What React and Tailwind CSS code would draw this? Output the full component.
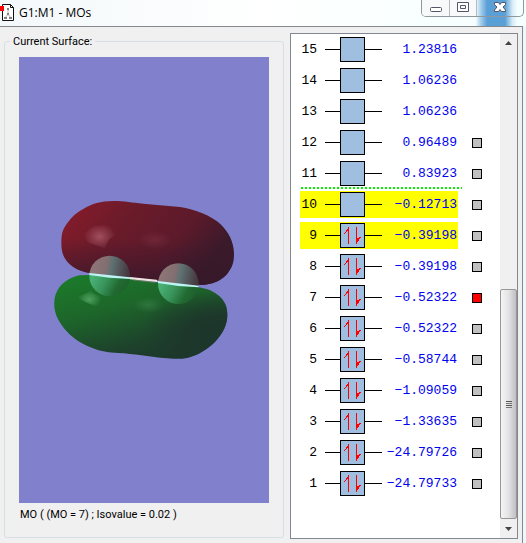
import React, { useState } from 'react';

const orbitals = [
  { id: 15, energy: '1.23816' },
  { id: 14, energy: '1.06236' },
  { id: 13, energy: '1.06236' },
  { id: 12, energy: '0.96489', selectable: true },
  { id: 11, energy: '0.83923', selectable: true },
  { id: 10, energy: '−0.12713', selectable: true, highlighted: true },
  { id: 9, energy: '−0.39198', selectable: true, highlighted: true, occupied: true },
  { id: 8, energy: '−0.39198', selectable: true, occupied: true },
  { id: 7, energy: '−0.52322', selectable: true, occupied: true },
  { id: 6, energy: '−0.52322', selectable: true, occupied: true },
  { id: 5, energy: '−0.58744', selectable: true, occupied: true },
  { id: 4, energy: '−1.09059', selectable: true, occupied: true },
  { id: 3, energy: '−1.33635', selectable: true, occupied: true },
  { id: 2, energy: '−24.79726', selectable: true, occupied: true },
  { id: 1, energy: '−24.79733', selectable: true, occupied: true },
];

function DocumentIcon() {
  return (
    <svg className="h-5 w-4 shrink-0" viewBox="0 0 16 20" aria-hidden="true">
      <path d="M2.500 1.500h8l3 3v13h-11z" fill="#fff" stroke="#111" />
      <path d="M10.500 1.500v3h3" fill="none" stroke="#111" />
      <path d="M8 6v5l-3 4M8 11l3 4" fill="none" stroke="#b0b0b0" />
      <path d="M7 5h2v2H7zM7 10h2v2H7zM4 14h3v2H4zM9 14h3v2H9z" fill="#808080" />
      <path d="M0 3h4v5H0z" fill="#f00" />
    </svg>
  );
}

function TitleBar() {
  return (
    <header className="flex h-[26px] justify-between bg-linear-to-r from-[#f3f8fa] via-white to-[#f4ffff]">
      <div className="flex items-center">
        <DocumentIcon />
        <h1 className="pl-[3px] font-['Open_Sans',sans-serif] text-[12px] text-black">G1:M1 - MOs</h1>
      </div>
      <div className="flex bg-[linear-gradient(to_right,transparent_52%,#a5cdea_57%,#5a9fd6_63%,#5a9fd6_80%,#d5ebf7_87%,transparent_92%)] pr-[2px]">
        <div className="flex h-[17px] overflow-hidden rounded-b-[5px] border border-t-0 border-[#8f989e]">
          <button type="button" aria-label="Minimize" className="flex w-[28px] items-center justify-center border-r border-[#b5babf] bg-[#f7f9fa]">
            <svg className="h-[17px] w-[14px]" viewBox="0 0 14 17">
              <rect x="1.500" y="7.500" width="11" height="4" rx="1" fill="#fff" stroke="#535666" />
            </svg>
          </button>
          <button type="button" aria-label="Maximize" className="flex w-[27px] items-center justify-center border-r border-[#b5babf] bg-[#f7f9fa]">
            <svg className="h-[17px] w-[14px]" viewBox="0 0 14 17">
              <path d="M1.500 2.500h11v9h-11zM4.500 5.500v3h5v-3z" fill="#fff" fillRule="evenodd" stroke="#535666" />
            </svg>
          </button>
          <button type="button" aria-label="Close" className="flex w-[46px] items-center justify-center">
            <svg className="h-[17px] w-[14px]" viewBox="0 0 14 17">
              <path d="M1.500 2.500H5.500L7 4.500l1.500-2h4v2L10 7l2.500 3v1.500h-4L7 9.500l-1.500 2h-4V10L4 7L1.500 4.500z" fill="#fff" stroke="#535666" />
            </svg>
          </button>
        </div>
      </div>
    </header>
  );
}

// Isosurface of a pi orbital: one lobe on each side of the bond axis
function OrbitalView() {
  return (
    <svg className="h-0 w-full flex-1 bg-[#8080cc]" viewBox="0 0 250 446" role="img" aria-label="Molecular orbital surface">
      <defs>
        <linearGradient id="red" x1="0" y1="0.250" x2="1" y2="0.650">
          <stop offset="0" stopColor="#841b2a" />
          <stop offset="0.300" stopColor="#6b1b2a" />
          <stop offset="0.650" stopColor="#5c1a2b" />
          <stop offset="0.900" stopColor="#3b1a2a" />
        </linearGradient>
        <linearGradient id="redShade" x1="0" y1="0" x2="0" y2="1">
          <stop offset="0.450" stopColor="#35182a" stopOpacity="0" />
          <stop offset="1" stopColor="#35182a" stopOpacity="0.800" />
        </linearGradient>
        <linearGradient id="green" x1="0.100" y1="0" x2="0.650" y2="1">
          <stop offset="0" stopColor="#1b7b2a" />
          <stop offset="0.400" stopColor="#1d662a" />
          <stop offset="0.800" stopColor="#1d412b" />
          <stop offset="1" stopColor="#1d372b" />
        </linearGradient>
        <radialGradient id="greenShade" cx="0.950" cy="0.650" r="0.450">
          <stop offset="0" stopColor="#1d352b" />
          <stop offset="0.400" stopColor="#1d352b" stopOpacity="0.800" />
          <stop offset="1" stopColor="#1d352b" stopOpacity="0" />
        </radialGradient>
        <linearGradient id="atomTop" x1="0" y1="0" x2="1" y2="0.200">
          <stop offset="0" stopColor="#927879" />
          <stop offset="0.450" stopColor="#826e70" />
          <stop offset="0.580" stopColor="#5f7172" />
          <stop offset="1" stopColor="#46383f" />
        </linearGradient>
        <linearGradient id="atomBottom" x1="0.100" y1="0.500" x2="0.850" y2="0.900">
          <stop offset="0" stopColor="#49b075" />
          <stop offset="0.400" stopColor="#38935a" />
          <stop offset="0.750" stopColor="#216a32" />
          <stop offset="1" stopColor="#1f612c" />
        </linearGradient>
        <radialGradient id="shine">
          <stop offset="0" stopColor="#c07080" stopOpacity="0.600" />
          <stop offset="1" stopColor="#c07080" stopOpacity="0" />
        </radialGradient>
        <radialGradient id="shineGreen">
          <stop offset="0" stopColor="#70c080" stopOpacity="0.600" />
          <stop offset="1" stopColor="#70c080" stopOpacity="0" />
        </radialGradient>
        <clipPath id="above">
          <path d="M0 0H630V306L148 252L0 236z" />
        </clipPath>
        <clipPath id="below">
          <path d="M0 236L148 252L630 306V540H0z" />
        </clipPath>
        <path
          id="redLobe"
          d="M64 155C64 135 67 121 76 108C91 85 107 69 130 57C157 40 181 34 220 33C255 33 275 38 310 41L420 51C466 58 513 76 542 103C567 128 581 155 582 190C582 218 577 233 558 256C541 273 518 284 483 285L150 249C122 244 99 234 82 215C69 199 64 185 64 155z"
        />
        <path
          id="greenLobe"
          d="M148 255L118 256C88 263 66 278 53 300C42 320 43 333 43 350C46 377 57 397 80 424C102 448 128 464 165 477C190 485 204 487 235 489C280 491 330 500 370 504C400 507 420 508 445 503C475 496 500 479 524 457C548 431 562 405 562 375C562 353 557 338 541 321C523 304 500 295 475 292L350 277L270 266z"
        />
      </defs>
      <g transform="translate(21 133) scale(0.3333)">
        <use href="#redLobe" fill="url(#red)" />
        <use href="#redLobe" fill="url(#redShade)" />
        <path d="M130 137C147 112 165 105 182 107L211 100C212 116 220 126 228 137C211 141 199 151 196 180C183 166 163 166 145 158z" fill="url(#shine)" />
        <ellipse cx="345" cy="150" rx="50" ry="28" fill="url(#shine)" opacity="0.250" />
        <use href="#greenLobe" fill="url(#green)" />
        <use href="#greenLobe" fill="url(#greenShade)" />
        <path d="M112 320C137 313 146 306 153 300C161 313 170 316 184 319L178 356C158 340 136 342 112 320z" fill="url(#shineGreen)" />
        <ellipse cx="325" cy="345" rx="45" ry="24" fill="url(#shineGreen)" opacity="0.350" />
        <g clipPath="url(#above)">
          <circle cx="209" cy="258" r="61" fill="url(#atomTop)" />
          <circle cx="415" cy="281" r="61" fill="url(#atomTop)" />
        </g>
        <g clipPath="url(#below)">
          <circle cx="209" cy="258" r="61" fill="url(#atomBottom)" />
          <circle cx="415" cy="281" r="61" fill="url(#atomBottom)" />
        </g>
        <path d="M148 249L270 262V267L208 263L148 255zM354 273L476 287V292L415 288L354 279z" fill="#bdf3f2" />
        <path d="M270 261L350 269L354 276L270 268z" fill="#eee3e0" />
        <path d="M280 270L345 277" stroke="#8b8780" strokeWidth="2" />
      </g>
    </svg>
  );
}

function SpinPair() {
  return (
    <svg className="h-[23px] w-[23px]" viewBox="0 0 23 23" shapeRendering="crispEdges" aria-hidden="true">
      <path
        d="M7 3h1v17H7zM6 5h1v2H6zM5 6h1v2H5zM4 8h1v1H4zM3 9h1v1H3zM15 3h1v17h-1zM16 14h1v4h-1zM17 14h1v3h-1zM18 13h1v2h-1zM19 13h1v1h-1z"
        fill="#f00"
      />
    </svg>
  );
}

function OrbitalRow({ orbital, checked, onToggle }) {
  const { id, energy, selectable, highlighted, occupied } = orbital;
  return (
    <li className="flex h-[31px] items-center gap-[14px] pl-[9px] font-['Liberation_Mono',monospace] text-[13px]">
      <label
        htmlFor={selectable ? `mo-${id}` : undefined}
        className={`flex h-[27px] w-[158px] items-center ${highlighted ? 'bg-[#ffff00]' : ''}`}
      >
        <span className="w-[17px] text-right text-black">{id}</span>
        <span className="ml-2 h-px w-[15px] bg-black" />
        <span className="h-[25px] w-[25px] shrink-0 border border-black bg-[#a0bee0]">
          {occupied && <SpinPair />}
        </span>
        <span className="h-px w-[17px] bg-black" />
        <span className="flex-1 pr-px text-right text-[#0000f0]">{energy}</span>
      </label>
      {selectable && (
        <input
          id={`mo-${id}`}
          type="checkbox"
          checked={checked}
          onChange={onToggle}
          className="h-[10px] w-[10px] appearance-none border border-black bg-[#c0c0c0] checked:bg-[#ff0000]"
        />
      )}
    </li>
  );
}

function ScrollBar() {
  return (
    <div className="flex w-[17px] shrink-0 flex-col bg-[#f0f0f0]">
      <button type="button" aria-label="Scroll up" className="flex h-[18px] items-center justify-center">
        <svg className="h-1 w-[7px]" viewBox="0 0 7 4">
          <path d="M0 4L3.500 0L7 4z" fill="#444" />
        </svg>
      </button>
      <div className="flex-[238]" />
      <div className="flex flex-[228] flex-col items-center justify-center gap-px rounded-[2px] border border-[#979797] bg-linear-to-r from-[#f5f5f5] via-[#e3e3e5] to-[#c0c0c4]">
        <span className="h-px w-[6px] bg-[#555]" />
        <span className="h-px w-[6px] bg-[#777]" />
        <span className="h-px w-[6px] bg-[#555]" />
        <span className="h-px w-[6px] bg-[#777]" />
      </div>
      <button type="button" aria-label="Scroll down" className="flex h-[19px] items-center justify-center">
        <svg className="h-1 w-[7px]" viewBox="0 0 7 4">
          <path d="M0 0L3.500 4L7 0z" fill="#444" />
        </svg>
      </button>
    </div>
  );
}

function App() {
  const [selected, setSelected] = useState([7]);

  const toggle = (id) => {
    setSelected((prev) => (prev.includes(id) ? prev.filter((x) => x !== id) : [...prev, id]));
  };

  return (
    <div className="flex min-h-screen flex-col bg-[#f0f0f0] font-['Roboto',sans-serif] text-[11px] text-black">
      <TitleBar />
      <div className="flex flex-1 bg-[#e9f8fa] pr-[3px]">
        <main className="flex flex-1 gap-[6px] border-t border-r border-[#85888c] bg-[#f0f0f0] pr-1 pb-1 pl-1">
          <section className="flex flex-1 flex-col pt-[14px] pb-px">
            <div className="flex flex-1 flex-col rounded-[3px] border border-[#d5dfe5] px-[14px] pb-[14px]">
              <h2 className="-mt-2 -ml-[9px] self-start bg-[#f0f0f0] px-[3px] leading-[16px]">Current Surface:</h2>
              <div className="mt-[7px] flex flex-1 flex-col">
                <OrbitalView />
              </div>
              <p className="mt-1 pl-px leading-[16px]">MO ( (MO = 7) ; Isovalue = 0.02 )</p>
            </div>
          </section>
          <section className="mt-[6px] flex w-[228px] border border-[#828790] bg-white">
            <ul className="flex-1">
              {orbitals.map((orbital) => (
                <React.Fragment key={orbital.id}>
                  {orbital.id === 10 && (
                    <li aria-hidden="true" className="relative">
                      <svg className="absolute -top-[2px] left-[10px] h-[2px] w-[161px]" shapeRendering="crispEdges">
                        <line x1="0" y1="1" x2="161" y2="1" stroke="#00f000" strokeWidth="2" strokeDasharray="2 2" />
                      </svg>
                    </li>
                  )}
                  <OrbitalRow
                    orbital={orbital}
                    checked={selected.includes(orbital.id)}
                    onToggle={() => toggle(orbital.id)}
                  />
                </React.Fragment>
              ))}
            </ul>
            <ScrollBar />
          </section>
        </main>
      </div>
    </div>
  );
}

export default App;
